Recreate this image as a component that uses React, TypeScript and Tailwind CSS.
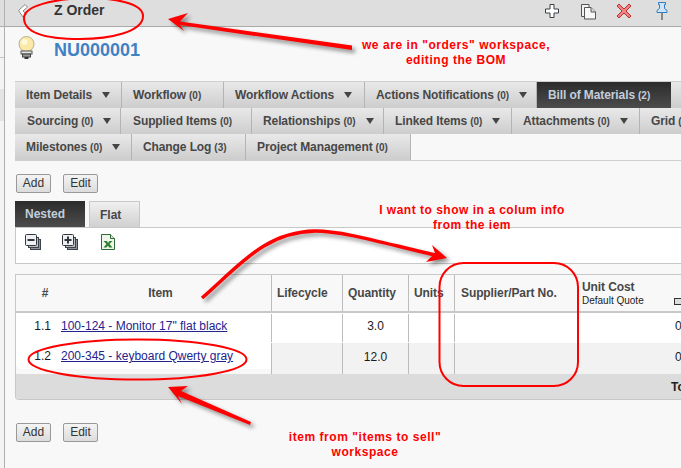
import React from "react";

type Tab = { label: string; count?: number; caret?: boolean; width: number; active?: boolean; pl: number };

const tabRows: Tab[][] = [
  [
    { label: "Item Details", caret: true, width: 107, pl: 11 },
    { label: "Workflow", count: 0, width: 102, pl: 11 },
    { label: "Workflow Actions", caret: true, width: 141, pl: 11 },
    { label: "Actions Notifications", count: 0, caret: true, width: 172, pl: 11 },
    { label: "Bill of Materials", count: 2, width: 134, active: true, pl: 11 },
    { label: "", width: 60, pl: 11 },
  ],
  [
    { label: "Sourcing", count: 0, caret: true, width: 106, pl: 12 },
    { label: "Supplied Items", count: 0, width: 131, pl: 12 },
    { label: "Relationships", count: 0, caret: true, width: 132, pl: 11 },
    { label: "Linked Items", count: 0, caret: true, width: 128, pl: 11 },
    { label: "Attachments", count: 0, caret: true, width: 128, pl: 11 },
    { label: "Grid", count: 0, caret: true, width: 80, pl: 11 },
  ],
  [
    { label: "Milestones", count: 0, caret: true, width: 117, pl: 11 },
    { label: "Change Log", count: 3, width: 114, pl: 11 },
    { label: "Project Management", count: 0, width: 165, pl: 11 },
  ],
];

function TabItem({ tab }: { tab: Tab }) {
  return (
    <div
      style={{ width: tab.width, paddingLeft: tab.pl }}
      className={
        tab.active
          ? "flex h-[26px] shrink-0 items-center whitespace-nowrap bg-gradient-to-b from-[#2c2c2c] to-[#4c4c4c] text-[#c3cedb]"
          : "flex h-[26px] shrink-0 items-center whitespace-nowrap border-r border-[#b4b4b4] bg-gradient-to-b from-[#e9e9e9] to-[#cdcdcd] text-[#474747]"
      }
    >
      <span className="font-bold tracking-[-0.1px]">{tab.label}</span>
      {tab.count !== undefined && <span className="ml-[3px] text-[10px] font-bold">({tab.count})</span>}
      {tab.caret && (
        <span className="ml-[10px] h-0 w-0 border-x-[4px] border-t-[6px] border-x-transparent border-t-[#444]" />
      )}
    </div>
  );
}

function PageButton({ label, className }: { label: string; className?: string }) {
  return (
    <button
      className={`h-[19px] rounded-[2px] border border-[#999] bg-gradient-to-b from-[#f4f4f4] to-[#dcdcdc] pb-[2px] text-[12px] leading-none text-[#333] ${className ?? ""}`}
    >
      {label}
    </button>
  );
}

function CollapseIcon({ plus }: { plus?: boolean }) {
  return (
    <svg width="16" height="16" viewBox="0 0 16 16">
      <rect x="5.5" y="5.5" width="10" height="10" fill="#8d939b" stroke="#3d424a" />
      <rect x="3.5" y="3.5" width="10" height="10" fill="#b9bdc3" stroke="#3d424a" />
      <rect x="0.5" y="0.5" width="11" height="11" rx="1" fill="#eef0f2" stroke="#33373d" />
      <rect x="2.5" y="5" width="7" height="2" fill="#33373d" />
      {plus && <rect x="5" y="2.5" width="2" height="7" fill="#33373d" />}
    </svg>
  );
}

const gridCols = "grid grid-cols-[40px_215px_71px_66px_46px_123px_1fr]";
const sep = "border-l border-[#bcbcbc]";

export default function App() {
  return (
    <div className="relative flex h-[468px] w-[681px] overflow-hidden bg-[#f8f8f8] font-['Liberation_Sans',sans-serif] text-[12px]">
      {/* Collapsed navigation rail */}
      <div className="flex w-[5px] shrink-0 flex-col border-r border-[#b0b0b0] bg-[#f4f4f4]">
        <div className="h-[27px] border-b border-[#b0b0b0] bg-[#dedede]" />
        <div className="mt-[30px] h-[1px] bg-[#c4c4c4]" />
        <div className="mt-[31px] h-[32px] bg-[#e4e4e4]" />
      </div>

      <div className="min-w-0 flex-1">
        {/* Header bar */}
        <div className="flex h-[27px] items-center border-b border-[#aaa] bg-[#dedede] pb-[4px]">
          <svg width="10" height="14" viewBox="0 0 10 14" className="ml-[13px] shrink-0">
            <path d="M7 0.5 L0.5 6.5 L5 13 L8.5 10.5 L5 7 L9.5 3 Z" fill="#fdfdfd" stroke="#8b8b8b" />
          </svg>
          <span className="ml-[26px] mb-[2px] text-[14px] font-bold text-[#333]">Z Order</span>
          <div className="ml-auto mr-[12px] flex items-center">
            <svg width="16" height="16" viewBox="0 0 16 16">
              <path d="M6 1.5 H10 V6 H14.5 V10 H10 V14.5 H6 V10 H1.5 V6 H6 Z" fill="#fff" stroke="#3a3f46" strokeWidth="1" />
            </svg>
            <svg width="17" height="17" viewBox="0 0 17 17" className="ml-[20px]">
              <path d="M1.5 1.5 H9 V13.5 H1.5 Z" fill="#f2f2f2" stroke="#555" />
              <path d="M4.5 4.5 H11 L15.5 9 V16 H4.5 Z" fill="#f8f8f8" stroke="#555" />
              <path d="M11 4.5 V9 H15.5" fill="#ddd" stroke="#555" />
            </svg>
            <svg width="16" height="16" viewBox="0 0 16 16" className="ml-[19px]">
              <path d="M3 1 L8 6 L13 1 L15 3 L10 8 L15 13 L13 15 L8 10 L3 15 L1 13 L6 8 L1 3 Z" fill="#e98585" stroke="#c32b2b" />
            </svg>
            <svg width="14" height="18" viewBox="0 0 14 18" className="ml-[23px]">
              <path d="M3.5 0.5 H10.5 V2.5 H9.5 V6.5 L12 8.5 V10.5 H2 V8.5 L4.5 6.5 V2.5 H3.5 Z" fill="#cfe4f7" stroke="#2e7cc4" />
              <path d="M7 11 V18" stroke="#333" />
            </svg>
          </div>
        </div>

        <div className="pl-[10px]">
          {/* Record title */}
          <div className="flex h-[54px] pt-[9px]">
            <svg width="18" height="24" viewBox="0 0 18 24" className="ml-[3px] shrink-0">
              <circle cx="8.5" cy="8" r="7.5" fill="#fbe9a7" stroke="#b7b08a" />
              <circle cx="6.5" cy="6" r="3" fill="#fff8dc" />
              <rect x="3" y="15" width="11" height="3" fill="#e8e8e8" stroke="#555" />
              <rect x="4.5" y="18" width="8" height="3" fill="#999" stroke="#444" />
              <rect x="6.5" y="21" width="4" height="2" fill="#333" />
            </svg>
            <span className="ml-[18px] mt-[2px] text-[18px] leading-[24px] font-bold text-[#3f82c4]">NU000001</span>
          </div>

          {/* Tab strip */}
          <div className="w-[700px] border-y border-[#cfcfcf]">
            {tabRows.map((row, i) => (
              <div key={i} className="flex">
                {row.map((tab, j) => (
                  <TabItem key={j} tab={tab} />
                ))}
              </div>
            ))}
          </div>

          {/* Upper actions */}
          <div className="mt-[13px] flex pl-[1px]">
            <PageButton label="Add" className="w-[35px]" />
            <PageButton label="Edit" className="ml-[12px] w-[35px]" />
          </div>

          {/* View tabs */}
          <div className="mt-[8px] flex gap-[4px]">
            <div className="flex h-[26px] w-[70px] items-center bg-gradient-to-b from-[#2c2c2c] to-[#4c4c4c] pl-[10px] font-bold text-[#c3cedb]">
              Nested
            </div>
            <div className="flex h-[26px] w-[51px] items-center border-x border-t border-[#c8c8c8] bg-gradient-to-b from-[#f0f0f0] to-[#d0d0d0] pl-[10px] font-bold text-[#474747]">
              Flat
            </div>
          </div>

          {/* Toolbar */}
          <div className="flex h-[37px] w-[700px] border-y border-l border-[#c8c8c8] bg-white pl-[9px] pt-[6px]">
            <CollapseIcon />
            <div className="ml-[21px]">
              <CollapseIcon plus />
            </div>
            <svg width="14" height="16" viewBox="0 0 14 16" className="ml-[23px]">
              <path d="M0.5 0.5 H9.5 L13.5 4.5 V15.5 H0.5 Z" fill="#eef5ea" stroke="#2f6b34" />
              <path d="M9.5 0.5 V4.5 H13.5" fill="#d7e8d0" stroke="#2f6b34" />
              <path d="M2.5 7 L6 7 L7 9 L8.5 7 L11.5 7 L8.5 10 L11.5 13.5 L8 13.5 L7 11.5 L5.5 13.5 L2.5 13.5 L5.5 10 Z" fill="#2f7d33" />
            </svg>
          </div>

          {/* Bill of materials table */}
          <div className="mt-[10px] w-[700px] overflow-hidden rounded-bl-[4px] border-y border-l border-[#c8c8c8]">
            <div className={`${gridCols} h-[38px] border-b-2 border-[#c8c8c8] font-bold tracking-[-0.1px] text-[#474747]`}>
              <div className="flex items-center justify-center pl-[18px]">#</div>
              <div className="flex items-center justify-center pr-[6px]">Item</div>
              <div className={`${sep} flex items-center pl-[5px]`}>Lifecycle</div>
              <div className={`${sep} flex items-center pl-[5px]`}>Quantity</div>
              <div className={`${sep} flex items-center pl-[5px]`}>Units</div>
              <div className={`${sep} flex items-center pl-[6px]`}>Supplier/Part No.</div>
              <div className="relative pl-[5px] pt-[5px]">
                <div className="leading-[15px]">Unit Cost</div>
                <div className="text-[10px] leading-[11px] font-normal tracking-normal text-[#222]">Default Quote</div>
                <span className="absolute left-[97px] top-[23px] h-[7px] w-[8px] border border-[#333] bg-[#ddd]" />
              </div>
            </div>

            <div className={`${gridCols} h-[30px] bg-white text-[#1a1a1a]`}>
              <div className="flex items-center justify-end pb-[4px] pr-[5px]">1.1</div>
              <div className="flex items-center pb-[4px] pl-[5px]">
                <a className="text-[#23238e] underline">100-124 - Monitor 17" flat black</a>
              </div>
              <div className={`${sep} my-[1px]`} />
              <div className={`${sep} my-[1px] flex items-center justify-center pb-[4px]`}>3.0</div>
              <div className={`${sep} my-[1px]`} />
              <div className={`${sep} my-[1px]`} />
              <div className="flex items-center pb-[4px] pl-[98px]">0.00</div>
            </div>

            <div className={`${gridCols} h-[31px] text-[#1a1a1a]`}>
              <div className="mb-[5px] flex items-center justify-end rounded-bl-[5px] bg-white pr-[5px]">1.2</div>
              <div className="mb-[5px] flex items-center bg-white pl-[5px]">
                <a className="text-[#23238e] underline">200-345 - keyboard Qwerty gray</a>
              </div>
              <div className={`${sep} bg-[#f2f2f2]`} />
              <div className={`${sep} flex items-center justify-center bg-[#f2f2f2] pb-[3px]`}>12.0</div>
              <div className={`${sep} bg-[#f2f2f2]`} />
              <div className={`${sep} bg-[#f2f2f2]`} />
              <div className="flex items-center bg-[#f2f2f2] pb-[3px] pl-[98px]">0.00</div>
            </div>

            <div className="flex h-[25px] items-center bg-[#dcdcdc] pl-[655px] font-bold whitespace-nowrap text-[#222]">
              Total
            </div>
          </div>

          {/* Lower actions */}
          <div className="mt-[23px] flex pl-[1px]">
            <PageButton label="Add" className="w-[35px]" />
            <PageButton label="Edit" className="ml-[12px] w-[35px]" />
          </div>
        </div>
      </div>

      {/* Hand-drawn review notes laid over the page */}
      <svg width="681" height="468" viewBox="0 0 681 468" className="pointer-events-none absolute left-0 top-0">
        <g fill="none" stroke="#f00" strokeWidth="2">
          <path d="M24 18 C 24 -6, 143 -10, 143 16 C 143 32, 110 39, 80 39 C 50 39, 24 35, 24 18 Z" />
          <ellipse cx="137.5" cy="359.5" rx="109" ry="20" />
          <rect x="439.5" y="263" width="138.5" height="123" rx="24" />
        </g>
        <g className="drop-shadow-[3px_3px_2px_rgba(0,0,0,0.45)]">
          <path d="M168 19 L188 13 L180 21.5 L352 45.5 L352 50 L180 25 L184 31 Z" fill="#f00" />
          <path d="M202 298 C 240 265, 265 232, 315 231 C 345 231, 390 245, 435 255" fill="none" stroke="#f00" strokeWidth="3.5" />
          <path d="M447 258 L432 245 L435 253 L426 262 Z" fill="#f00" />
          <path d="M168 387 L188 386 L181 391 L251 422 L250 425 L178 396 L182 404 Z" fill="#f00" />
        </g>
      </svg>
      <div className="pointer-events-none absolute left-[353px] top-[38px] w-[206px] text-center text-[12px] leading-[15px] font-bold tracking-[0.55px] text-[#f00]">
        we are in "orders" workspace,
        <br />
        editing the BOM
      </div>
      <div className="pointer-events-none absolute left-[362px] top-[203px] w-[220px] text-center text-[12px] leading-[15px] font-bold tracking-[0.5px] text-[#f00]">
        I want to show in a colum info
        <br />
        from the iem
      </div>
      <div className="pointer-events-none absolute left-[265px] top-[430px] w-[200px] text-center text-[12px] leading-[15px] font-bold tracking-[0.55px] text-[#f00]">
        item from "items to sell"
        <br />
        workspace
      </div>
    </div>
  );
}
